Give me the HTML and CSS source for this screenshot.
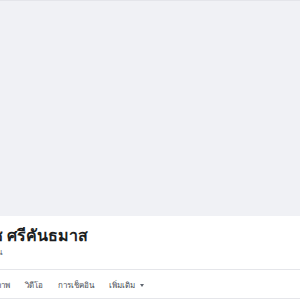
FILE: index.html
```html
<!DOCTYPE html>
<html lang="th">
<head>
  <meta charset="UTF-8">
  <meta name="viewport" content="width=device-width, initial-scale=1.0">
  <title>ธนัช ศรีคันธมาส</title>
  <link rel="stylesheet" href="styles.css">
</head>
<body>
  <div class="cover"></div>
  <div class="profile">
    <div class="info">
      <h1 class="name">ธนัช ศรีคันธมาส</h1>
      <div class="sub">ชื่อเล่น</div>
    </div>
    <ul class="tabs">
      <li>รูปภาพ</li>
      <li>วิดีโอ</li>
      <li>การเช็คอิน</li>
      <li class="more">เพิ่มเติม<span class="caret"></span></li>
    </ul>
  </div>
</body>
</html>
```

FILE: styles.css
```css
/* หน้าโปรไฟล์ */
body {
  margin: 0;
  font-family: "Noto Sans", "DejaVu Sans", sans-serif;
  background-color: #fff;
  overflow: hidden;
}
.cover {
  height: 215px;
  background-color: #f0f1f5;
  border-top: 1px solid #e4e5ea;
}
.info {
  height: 53px;
  border-bottom: 1px solid #e5e6ea;
}
.name {
  margin: 0 0 0 -29px;
  padding-top: 8px;
  font-size: 16px;
  line-height: 22px;
  font-weight: bold;
  color: #1c1e21;
  white-space: nowrap;
}
.sub {
  margin-left: -21px;
  font-size: 8px;
  line-height: 12px;
  color: #606770;
  white-space: nowrap;
}
.tabs {
  display: flex;
  gap: 15px;
  margin: 0 0 0 -13px;
  padding: 0;
  list-style: none;
  height: 28px;
  border-bottom: 1px solid #e5e6ea;
}
.tabs li {
  font-size: 8px;
  line-height: 30px;
  color: #4b4f56;
  white-space: nowrap;
}
.caret {
  display: inline-block;
  margin-left: 5px;
  vertical-align: middle;
  border-left: 2.5px solid transparent;
  border-right: 2.5px solid transparent;
  border-top: 3px solid #606770;
}
```
